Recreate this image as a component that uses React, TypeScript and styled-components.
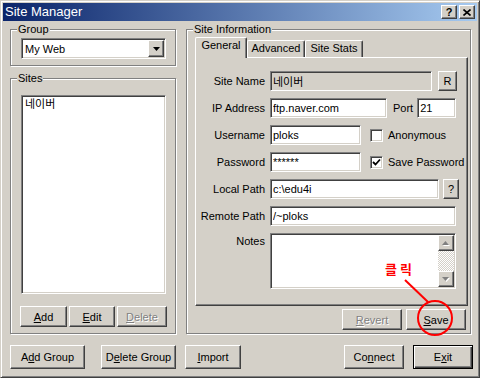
import React from "react";
import styled, { createGlobalStyle, css } from "styled-components";

const GlobalStyle = createGlobalStyle`
  html, body {
    margin: 0;
    padding: 0;
  }
  body {
    background: #d4d0c8;
    font-family: "Liberation Sans", "Noto Sans CJK KR", sans-serif;
    font-size: 11px;
    color: #000;
  }
  * {
    box-sizing: border-box;
  }
`;

const sunken = css`
  border: 1px solid;
  border-color: #808080 #fff #fff #808080;
  box-shadow: inset 1px 1px #404040, inset -1px -1px #d4d0c8;
`;

const raised = css`
  border: 1px solid;
  border-color: #fff #404040 #404040 #fff;
  box-shadow: inset -1px -1px #808080;
`;

const Window = styled.div`
  position: relative;
  width: 480px;
  height: 378px;
  display: flex;
  flex-direction: column;
  padding: 2px;
  background: #d4d0c8;
  border: 1px solid;
  border-color: #d4d0c8 #404040 #404040 #d4d0c8;
  box-shadow: inset 1px 1px #fff, inset -1px -1px #808080;
`;

const TitleBar = styled.div`
  flex: none;
  height: 18px;
  display: flex;
  align-items: center;
  gap: 2px;
  padding: 0 2px;
  background: linear-gradient(to right, #0a246a, #a6caf0);
`;

const Title = styled.span`
  flex: 1;
  color: #fff;
  font-size: 13px;
  line-height: 18px;
  white-space: nowrap;
`;

const CaptionButton = styled.button`
  width: 16px;
  height: 14px;
  padding: 0;
  ${raised};
  background: #d4d0c8;
  display: flex;
  align-items: center;
  justify-content: center;
  font: bold 11px "Liberation Sans", sans-serif;
  color: #000;
`;

const Main = styled.div`
  flex: 1;
  min-height: 0;
  display: flex;
  gap: 10px;
  padding: 2px 6px 0 7px;
`;

const LeftColumn = styled.div`
  width: 166px;
  flex: none;
  display: flex;
  flex-direction: column;
`;

const GroupBox = styled.fieldset<{ $grow?: boolean; $top?: number }>`
  margin: ${(p) => p.$top ?? 0}px 0 0 0;
  padding: 0;
  min-width: 0;
  flex: ${(p) => (p.$grow ? 1 : "none")};
  border: 1px solid #808080;
  box-shadow: 1px 1px #fff, inset 1px 1px #fff;
`;

const Legend = styled.legend`
  margin-left: 6px;
  padding: 0 1px;
  line-height: 13px;
  background: #d4d0c8;
`;

const BoxBody = styled.div<{ $pad: string }>`
  padding: ${(p) => p.$pad};
`;

const Combo = styled.div`
  ${sunken};
  height: 21px;
  background: #fff;
  display: flex;
  align-items: center;
  padding: 1px 1px 1px 3px;
`;

const ComboText = styled.span`
  flex: 1;
`;

const DropButton = styled.span`
  width: 16px;
  height: 17px;
  ${raised};
  background: #d4d0c8;
  display: flex;
  align-items: center;
  justify-content: center;
`;

const ListBox = styled.div`
  ${sunken};
  height: 199px;
  background: #fff;
  padding: 2px 2px;
`;

const ListItem = styled.div`
  line-height: 13px;
  padding-left: 1px;
`;

const ButtonRow = styled.div`
  display: flex;
  gap: 2px;
  margin: 12px -1px 0 -1px;
`;

const Button = styled.button<{ $w: number; $h?: number; $default?: boolean }>`
  width: ${(p) => p.$w}px;
  height: ${(p) => p.$h ?? 21}px;
  flex: none;
  padding: 0;
  font: inherit;
  color: #000;
  background: #d4d0c8;
  ${raised};
  ${(p) =>
    p.$default &&
    css`
      border-color: #000;
      box-shadow: inset 1px 1px #fff, inset -1px -1px #404040, inset -2px -2px #808080;
    `}
  &:disabled {
    color: #808080;
    text-shadow: 1px 1px #fff;
  }
`;

const RightBody = styled.div`
  padding: 1px 2px 3px 8px;
`;

const TabStrip = styled.div`
  position: relative;
  z-index: 1;
  height: 20px;
  display: flex;
  align-items: flex-end;
`;

const Tab = styled.div<{ $w: number; $active?: boolean }>`
  width: ${(p) => p.$w}px;
  height: ${(p) => (p.$active ? 21 : 17)}px;
  margin-bottom: ${(p) => (p.$active ? -1 : 0)}px;
  padding-top: 1px;
  text-align: center;
  line-height: 13px;
  background: #d4d0c8;
  border: 1px solid;
  border-color: #fff #404040 transparent #fff;
  border-bottom: none;
  border-radius: 2px 2px 0 0;
  box-shadow: inset -1px 0 #808080;
`;

const TabPanel = styled.div`
  height: 249px;
  ${raised};
  padding-top: 13px;
`;

const Form = styled.div`
  display: grid;
  grid-template-columns: 69px 1fr;
  grid-template-rows: repeat(6, 20px) 56px;
  column-gap: 5px;
  row-gap: 7px;
`;

const FieldLabel = styled.label<{ $top?: boolean }>`
  text-align: right;
  white-space: nowrap;
  align-self: ${(p) => (p.$top ? "start" : "center")};
  padding-top: ${(p) => (p.$top ? 2 : 0)}px;
`;

const FieldRow = styled.div`
  display: flex;
  align-items: center;
`;

const TextBox = styled.input<{ $w: number; $grey?: boolean }>`
  ${sunken};
  width: ${(p) => p.$w}px;
  height: 20px;
  padding: 0 2px;
  font: inherit;
  color: #000;
  background: ${(p) => (p.$grey ? "#d4d0c8" : "#fff")};
  outline: none;
`;

const SideLabel = styled.span<{ $gap: number }>`
  margin: 0 4px 0 ${(p) => p.$gap}px;
`;

const SmallButton = styled(Button)`
  margin-left: ${(p) => (p.$w === 19 ? 6 : 4)}px;
`;

const CheckLabel = styled.label`
  display: flex;
  align-items: center;
  gap: 5px;
  margin-left: 9px;
  white-space: nowrap;
`;

const CheckBox = styled.span`
  ${sunken};
  width: 13px;
  height: 13px;
  flex: none;
  background: #fff;
  display: flex;
  align-items: center;
  justify-content: center;
`;

const NotesBox = styled.div`
  ${sunken};
  width: 186px;
  height: 56px;
  background: #fff;
  display: flex;
  padding: 1px;
`;

const NotesText = styled.div`
  flex: 1;
`;

const ScrollBar = styled.div`
  width: 16px;
  display: flex;
  flex-direction: column;
`;

const ScrollArrow = styled.span`
  width: 16px;
  height: 16px;
  flex: none;
  ${raised};
  background: #d4d0c8;
  display: flex;
  align-items: center;
  justify-content: center;
`;

const ScrollTrack = styled.span`
  flex: 1;
  background: repeating-conic-gradient(#fff 0 25%, #d4d0c8 0 50%) 0 0 / 2px 2px;
`;

const ActionRow = styled.div`
  display: flex;
  justify-content: flex-end;
  gap: 4px;
  margin-top: 3px;
  padding-right: 2px;
`;

const Footer = styled.div`
  flex: none;
  display: flex;
  align-items: center;
  padding: 11px 4px 6px 7px;
`;

const Spacer = styled.div`
  flex: 1;
`;

const Note = styled.span`
  position: absolute;
  left: 384px;
  top: 260px;
  color: #f00;
  font: bold 13px "Noto Sans CJK KR", sans-serif;
  letter-spacing: 3px;
  line-height: 16px;
`;

const Marks = styled.svg`
  position: absolute;
  left: -1px;
  top: -1px;
  pointer-events: none;
`;

const Triangle = ({ up, color }: { up?: boolean; color: string }) => (
  <svg width="7" height="4" viewBox="0 0 7 4">
    <path d={up ? "M3.5 0 L7 4 L0 4 Z" : "M0 0 L7 0 L3.5 4 Z"} fill={color} />
  </svg>
);

const GreyArrow = ({ up }: { up?: boolean }) => (
  <svg width="8" height="5" viewBox="0 0 8 5">
    <path d={up ? "M4.5 1 L8 5 L1 5 Z" : "M1 1 L8 1 L4.5 5 Z"} fill="#fff" />
    <path d={up ? "M3.5 0 L7 4 L0 4 Z" : "M0 0 L7 0 L3.5 4 Z"} fill="#808080" />
  </svg>
);

export default function App() {
  return (
    <>
      <GlobalStyle />
      <Window>
        <TitleBar>
          <Title>Site Manager</Title>
          <CaptionButton>?</CaptionButton>
          <CaptionButton>
            <svg width="8" height="7" viewBox="0 0 8 7">
              <path d="M0.5 0.5 L7.5 6.5 M7.5 0.5 L0.5 6.5" stroke="#000" strokeWidth="1.6" />
            </svg>
          </CaptionButton>
        </TitleBar>

        <Main>
          <LeftColumn>
            <GroupBox>
              <Legend>Group</Legend>
              <BoxBody $pad="2px 9px 6px 10px">
                <Combo>
                  <ComboText>My Web</ComboText>
                  <DropButton>
                    <Triangle color="#000" />
                  </DropButton>
                </Combo>
              </BoxBody>
            </GroupBox>

            <GroupBox $grow $top={6}>
              <Legend>Sites</Legend>
              <BoxBody $pad="10px 9px 6px 10px">
                <ListBox>
                  <ListItem>네이버</ListItem>
                </ListBox>
                <ButtonRow>
                  <Button $w={47}><u>A</u>dd</Button>
                  <Button $w={46}><u>E</u>dit</Button>
                  <Button $w={50} disabled><u>D</u>elete</Button>
                </ButtonRow>
              </BoxBody>
            </GroupBox>
          </LeftColumn>

          <GroupBox $grow>
            <Legend>Site Information</Legend>
            <RightBody>
              <TabStrip>
                <Tab $w={52} $active>General</Tab>
                <Tab $w={58}>Advanced</Tab>
                <Tab $w={58}>Site Stats</Tab>
              </TabStrip>
              <TabPanel>
                <Form>
                  <FieldLabel>Site Name</FieldLabel>
                  <FieldRow>
                    <TextBox $w={162} $grey readOnly defaultValue="네이버" />
                    <SmallButton $w={19} $h={20}>R</SmallButton>
                  </FieldRow>

                  <FieldLabel>IP Address</FieldLabel>
                  <FieldRow>
                    <TextBox $w={117} readOnly defaultValue="ftp.naver.com" />
                    <SideLabel $gap={6}>Port</SideLabel>
                    <TextBox $w={39} readOnly defaultValue="21" />
                  </FieldRow>

                  <FieldLabel>Username</FieldLabel>
                  <FieldRow>
                    <TextBox $w={91} readOnly defaultValue="ploks" />
                    <CheckLabel>
                      <CheckBox />
                      Anonymous
                    </CheckLabel>
                  </FieldRow>

                  <FieldLabel>Password</FieldLabel>
                  <FieldRow>
                    <TextBox $w={91} readOnly defaultValue="******" />
                    <CheckLabel>
                      <CheckBox>
                        <svg width="9" height="9" viewBox="0 0 9 9">
                          <path d="M1 4 L3.5 6.5 L8 1.5" fill="none" stroke="#000" strokeWidth="1.8" />
                        </svg>
                      </CheckBox>
                      Save Password
                    </CheckLabel>
                  </FieldRow>

                  <FieldLabel>Local Path</FieldLabel>
                  <FieldRow>
                    <TextBox $w={169} readOnly defaultValue="c:\edu4i" />
                    <SmallButton $w={16} $h={20}>?</SmallButton>
                  </FieldRow>

                  <FieldLabel>Remote Path</FieldLabel>
                  <FieldRow>
                    <TextBox $w={186} readOnly defaultValue="/~ploks" />
                  </FieldRow>

                  <FieldLabel $top>Notes</FieldLabel>
                  <NotesBox>
                    <NotesText />
                    <ScrollBar>
                      <ScrollArrow>
                        <GreyArrow up />
                      </ScrollArrow>
                      <ScrollTrack />
                      <ScrollArrow>
                        <GreyArrow />
                      </ScrollArrow>
                    </ScrollBar>
                  </NotesBox>
                </Form>
              </TabPanel>
              <ActionRow>
                <Button $w={60} disabled><u>R</u>evert</Button>
                <Button $w={60}><u>S</u>ave</Button>
              </ActionRow>
            </RightBody>
          </GroupBox>
        </Main>

        <Footer>
          <Button $w={75} $h={24} style={{ marginRight: 16 }}>A<u>d</u>d Group</Button>
          <Button $w={75} $h={24} style={{ marginRight: 9 }}>D<u>e</u>lete Group</Button>
          <Button $w={56} $h={24}><u>I</u>mport</Button>
          <Spacer />
          <Button $w={60} $h={24} style={{ marginRight: 9 }}>Co<u>n</u>nect</Button>
          <Button $w={60} $h={24} $default>E<u>x</u>it</Button>
        </Footer>

        <Note>클릭</Note>
        <Marks width="480" height="378" viewBox="0 0 480 378">
          <line x1="405" y1="280" x2="428" y2="302" stroke="#f00" strokeWidth="2" />
          <ellipse cx="435" cy="318" rx="17" ry="17" fill="none" stroke="#f00" strokeWidth="2" />
        </Marks>
      </Window>
    </>
  );
}
